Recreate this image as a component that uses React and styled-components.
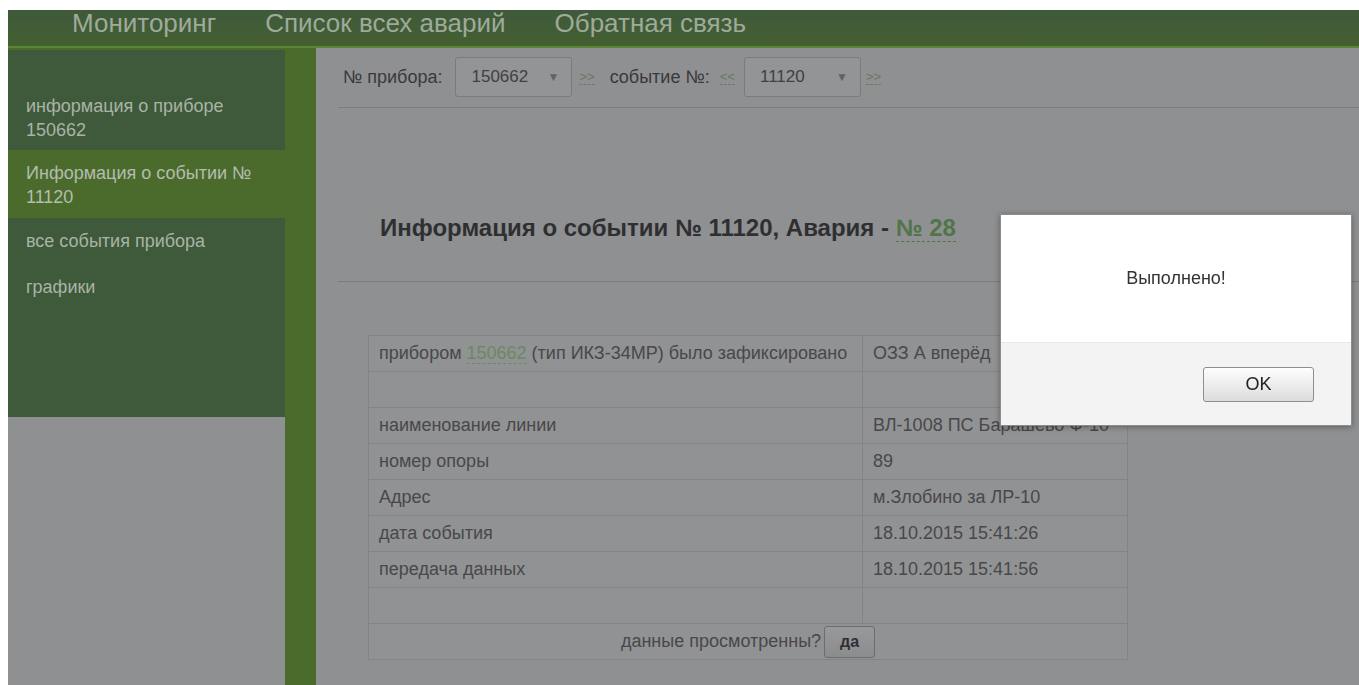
import React from "react";
import styled, { createGlobalStyle } from "styled-components";

const GlobalStyle = createGlobalStyle`
  html, body {
    margin: 0;
    padding: 0;
    background: #ffffff;
  }
  body {
    font-family: "Liberation Sans", Arial, sans-serif;
  }
`;

const Page = styled.div`
  min-height: 685px;
  padding: 10px 0 0 8px;
  box-sizing: border-box;
  display: flex;
  flex-direction: column;
`;

const Frame = styled.div`
  flex: 1;
  display: flex;
  flex-direction: column;
  background: #4a6b2c;
`;

const TopNav = styled.nav`
  height: 36px;
  display: flex;
  align-items: flex-start;
  padding-left: 64px;
  background: linear-gradient(#3f593c, #44602f);
  border-bottom: 2px solid #5a8436;
`;

const NavLink = styled.a`
  font-size: 26px;
  line-height: 27px;
  color: #9eaa9a;
  margin-right: 49px;
  text-decoration: none;
  cursor: pointer;
`;

const Columns = styled.div`
  flex: 1;
  display: flex;
`;

const LeftCol = styled.aside`
  width: 277px;
  margin-top: 2px;
  display: flex;
  flex-direction: column;
`;

const SideMenu = styled.ul`
  list-style: none;
  margin: 0;
  padding: 0 0 107px;
  background: #3e5a3a;
`;

const MenuItem = styled.li`
  padding: ${(p) => (p.$lead ? "44px 18px 8px" : p.$active ? "9px 18px" : "11px 18px")};
  border-bottom: ${(p) => (p.$lead ? "2px solid #4a6b2c" : "none")};
  background: ${(p) => (p.$active ? "#4a6b2c" : "transparent")};
  color: ${(p) => (p.$active ? "#b4bcaf" : "#aab3a6")};
  font-size: 18px;
  line-height: 24px;
  cursor: pointer;
`;

const Filler = styled.div`
  flex: 1;
  background: #8f9092;
`;

const Main = styled.main`
  flex: 1;
  margin-left: 31px;
  padding: 9px 0 26px 22px;
  background: #8f9092;
`;

const Toolbar = styled.div`
  display: flex;
  align-items: center;
  height: 40px;
  padding-left: 5px;
  font-size: 18px;
  color: #39393b;
`;

const Label = styled.span`
  margin: ${(p) => p.$m || "0"};
`;

const SelectBox = styled.div`
  width: 117px;
  height: 40px;
  box-sizing: border-box;
  display: flex;
  align-items: center;
  justify-content: space-between;
  padding: 0 12px 0 15px;
  border: 1px solid #7a7b7d;
  border-radius: 3px;
  background: #939496;
  color: #404042;
  font-size: 17px;
  margin: ${(p) => p.$m || "0"};
`;

const Caret = styled.span`
  font-size: 12px;
  color: #626264;
`;

const StepLink = styled.a`
  font-size: 13px;
  line-height: 14px;
  color: #66785f;
  border-bottom: 1px dashed #6c7d66;
  margin: ${(p) => p.$m || "0"};
  cursor: pointer;
`;

const Rule = styled.div`
  height: 1px;
  background: #7b7c7e;
  margin-top: ${(p) => p.$top}px;
`;

const Heading = styled.h2`
  margin: 105px 0 0 42px;
  font-size: 24px;
  line-height: 30px;
  font-weight: bold;
  color: #2f2f31;
`;

const GreenLink = styled.a`
  color: ${(p) => (p.$soft ? "#6a8962" : "#52744a")};
  border-bottom: 1px dashed ${(p) => (p.$soft ? "#6a8962" : "#52744a")};
  text-decoration: none;
  cursor: pointer;
`;

const InfoTable = styled.table`
  margin: 53px 0 0 30px;
  width: 760px;
  border-collapse: collapse;
  border: 1px solid #7c7d7f;
  background: #919294;
  font-size: 18px;
  color: #48484a;

  td {
    height: 35px;
    padding: 0 10px;
    border: 1px solid #838486;
    white-space: nowrap;
  }

  td:first-child {
    width: 473px;
  }
`;

const ConfirmCell = styled.td`
  text-align: center;
`;

const YesButton = styled.button`
  width: 51px;
  height: 32px;
  margin-left: 3px;
  border: 1px solid #6c6d6f;
  border-radius: 3px;
  background: linear-gradient(#98999b, #8b8c8e);
  font-family: inherit;
  font-size: 16px;
  font-weight: bold;
  color: #2f2f31;
  vertical-align: middle;
`;

const Dialog = styled.div`
  position: fixed;
  left: 1000px;
  top: 214px;
  width: 352px;
  box-sizing: border-box;
  border: 1px solid #8c8c8c;
  background: #ffffff;
  box-shadow: 0 1px 6px rgba(0, 0, 0, 0.35);
`;

const DialogBody = styled.div`
  height: 127px;
  display: flex;
  align-items: center;
  justify-content: center;
  font-size: 18px;
  color: #333333;
`;

const DialogFooter = styled.div`
  height: 82px;
  display: flex;
  align-items: center;
  justify-content: flex-end;
  padding-right: 37px;
  background: #f3f3f3;
  border-top: 1px solid #e8e8e8;
`;

const OkButton = styled.button`
  width: 111px;
  height: 35px;
  border: 1px solid #8e8e8e;
  border-radius: 3px;
  background: linear-gradient(#fefefe, #dcdcdc);
  font-family: inherit;
  font-size: 18px;
  color: #222222;
`;

const rows = [
  ["наименование линии", "ВЛ-1008 ПС Барашево Ф-10"],
  ["номер опоры", "89"],
  ["Адрес", "м.Злобино за ЛР-10"],
  ["дата события", "18.10.2015 15:41:26"],
  ["передача данных", "18.10.2015 15:41:56"],
];

export default function App() {
  return (
    <>
      <GlobalStyle />
      <Page>
        <Frame>
          <TopNav>
            <NavLink>Мониторинг</NavLink>
            <NavLink>Список всех аварий</NavLink>
            <NavLink>Обратная связь</NavLink>
          </TopNav>
          <Columns>
            <LeftCol>
              <SideMenu>
                <MenuItem $lead>
                  информация о приборе
                  <br />
                  150662
                </MenuItem>
                <MenuItem $active>
                  Информация о событии №
                  <br />
                  11120
                </MenuItem>
                <MenuItem>все события прибора</MenuItem>
                <MenuItem>графики</MenuItem>
              </SideMenu>
              <Filler />
            </LeftCol>
            <Main>
              <Toolbar>
                <Label>№ прибора:</Label>
                <SelectBox $m="0 0 0 13px">
                  150662 <Caret>▼</Caret>
                </SelectBox>
                <StepLink $m="0 0 0 7px">&gt;&gt;</StepLink>
                <Label $m="0 0 0 15px">событие №:</Label>
                <StepLink $m="0 0 0 10px">&lt;&lt;</StepLink>
                <SelectBox $m="0 0 0 9px">
                  11120 <Caret>▼</Caret>
                </SelectBox>
                <StepLink $m="0 0 0 5px">&gt;&gt;</StepLink>
              </Toolbar>
              <Rule $top={10} />
              <Heading>
                Информация о событии № 11120, Авария - <GreenLink>№ 28</GreenLink>
              </Heading>
              <Rule $top={38} />
              <InfoTable>
                <tbody>
                  <tr>
                    <td>
                      прибором <GreenLink $soft>150662</GreenLink> (тип ИКЗ-34МР) было зафиксировано
                    </td>
                    <td>ОЗЗ А вперёд</td>
                  </tr>
                  <tr>
                    <td />
                    <td />
                  </tr>
                  {rows.map(([name, value]) => (
                    <tr key={name}>
                      <td>{name}</td>
                      <td>{value}</td>
                    </tr>
                  ))}
                  <tr>
                    <td />
                    <td />
                  </tr>
                  <tr>
                    <ConfirmCell colSpan={2}>
                      данные просмотренны?
                      <YesButton>да</YesButton>
                    </ConfirmCell>
                  </tr>
                </tbody>
              </InfoTable>
            </Main>
          </Columns>
        </Frame>
      </Page>
      <Dialog>
        <DialogBody>Выполнено!</DialogBody>
        <DialogFooter>
          <OkButton>OK</OkButton>
        </DialogFooter>
      </Dialog>
    </>
  );
}
